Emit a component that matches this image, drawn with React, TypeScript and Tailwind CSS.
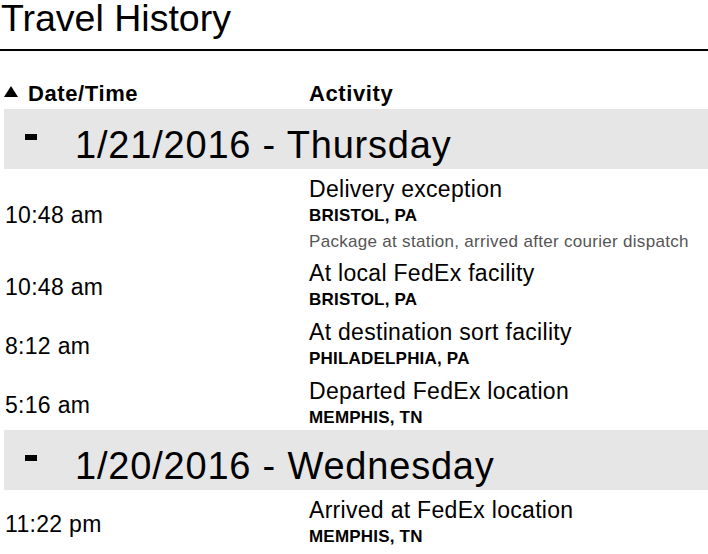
type Scan = {
  time: string;
  activity: string;
  location: string;
  note?: string;
};

type Day = {
  date: string;
  scans: Scan[];
};

const days: Day[] = [
  {
    date: '1/21/2016 - Thursday',
    scans: [
      {
        time: '10:48 am',
        activity: 'Delivery exception',
        location: 'BRISTOL, PA',
        note: 'Package at station, arrived after courier dispatch',
      },
      { time: '10:48 am', activity: 'At local FedEx facility', location: 'BRISTOL, PA' },
      { time: '8:12 am', activity: 'At destination sort facility', location: 'PHILADELPHIA, PA' },
      { time: '5:16 am', activity: 'Departed FedEx location', location: 'MEMPHIS, TN' },
    ],
  },
  {
    date: '1/20/2016 - Wednesday',
    scans: [
      { time: '11:22 pm', activity: 'Arrived at FedEx location', location: 'MEMPHIS, TN' },
    ],
  },
];

function SortArrow() {
  return (
    <svg width="14" height="11" viewBox="0 0 14 11" className="mt-[4px] shrink-0">
      <polygon points="7,0 14,11 0,11" fill="#000" />
    </svg>
  );
}

function DayBand({ date }: { date: string }) {
  return (
    <div className="ml-[4px] flex h-[60px] items-start bg-[#e6e6e6] pl-[21px] pt-[17px]">
      <span className="mt-[8px] block h-[6px] w-[12px] shrink-0 bg-black" />
      <span className="ml-[38px] text-[38px] leading-[38px] tracking-[0.8px] text-black">
        {date}
      </span>
    </div>
  );
}

function ScanRow({ scan }: { scan: Scan }) {
  return (
    <div className="flex items-center pl-[5px] pt-[8px]">
      <div className="w-[304px] shrink-0 text-[23px] leading-[24px] tracking-[0.3px] text-black">
        {scan.time}
      </div>
      <div className="flex flex-col">
        <div className="text-[23px] leading-[24px] tracking-[0.3px] text-black">
          {scan.activity}
        </div>
        <div className="mt-[3px] text-[17px] font-bold leading-[24px] tracking-[0.2px] text-black">
          {scan.location}
        </div>
        {scan.note && (
          <div className="mt-[3px] pb-[1px] text-[17px] leading-[21px] tracking-[0.3px] text-[#555]">
            {scan.note}
          </div>
        )}
      </div>
    </div>
  );
}

export default function App() {
  return (
    <div className="h-[554px] w-[708px] overflow-hidden bg-white font-['Liberation_Sans',Arial,Helvetica,sans-serif] text-black">
      <div className="h-[51px] border-b-2 border-black">
        <h1 className="pl-[1px] text-[37.5px] font-normal leading-[37px]">Travel History</h1>
      </div>

      <div className="flex h-[58px] items-start pl-[4px] pt-[31px]">
        <div className="flex w-[305px] shrink-0 items-start gap-[10px]">
          <SortArrow />
          <span className="text-[22px] font-bold leading-[24px] tracking-[0.6px]">Date/Time</span>
        </div>
        <span className="text-[22px] font-bold leading-[24px] tracking-[0.6px]">Activity</span>
      </div>

      {days.map((day) => (
        <div key={day.date}>
          <DayBand date={day.date} />
          {day.scans.map((scan, i) => (
            <ScanRow key={i} scan={scan} />
          ))}
        </div>
      ))}
    </div>
  );
}
